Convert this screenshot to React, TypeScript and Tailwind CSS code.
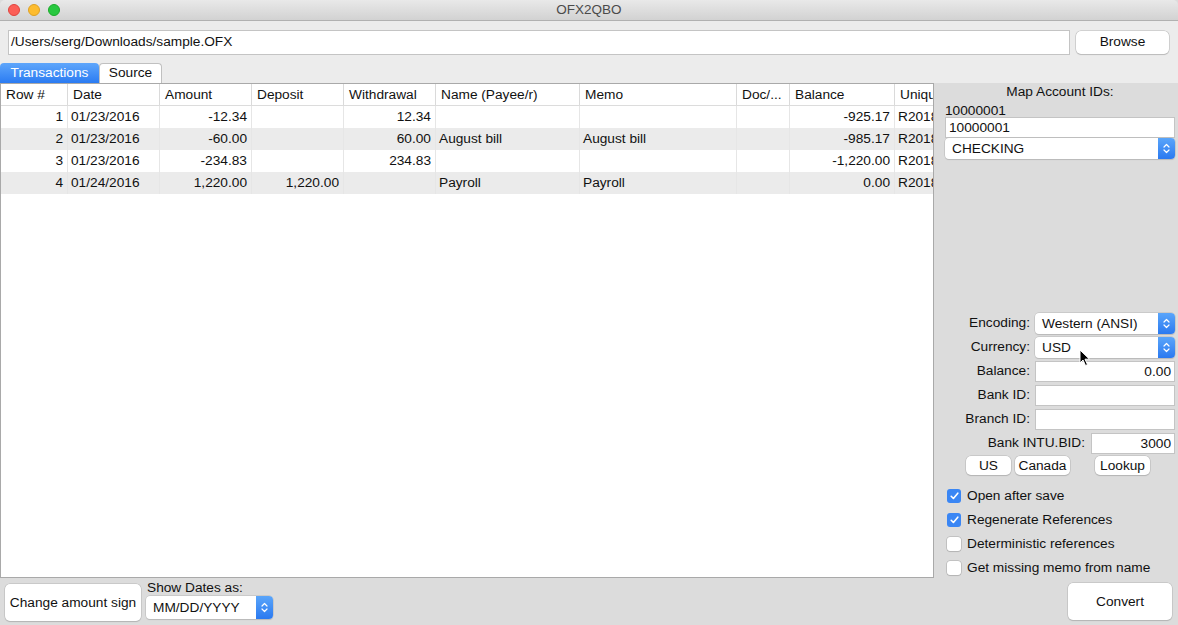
import React from 'react';

const cols = [66, 92, 92, 92, 92, 144, 157, 53, 105, 39];
const headers = ['Row #', 'Date', 'Amount', 'Deposit', 'Withdrawal', 'Name (Payee/r)', 'Memo', 'Doc/...', 'Balance', 'Uniqu'];
const rightAligned = [true, false, true, true, true, false, false, false, true, false];

const rows = [
  ['1', '01/23/2016', '-12.34', '', '12.34', '', '', '', '-925.17', 'R2018'],
  ['2', '01/23/2016', '-60.00', '', '60.00', 'August bill', 'August bill', '', '-985.17', 'R2018'],
  ['3', '01/23/2016', '-234.83', '', '234.83', '', '', '', '-1,220.00', 'R2018'],
  ['4', '01/24/2016', '1,220.00', '1,220.00', '', 'Payroll', 'Payroll', '', '0.00', 'R2018'],
];

function Stepper() {
  return (
    <div className="w-[17px] h-full rounded-r-[4px] bg-gradient-to-b from-[#5aa5fa] to-[#2a79f0] flex items-center justify-center">
      <svg width="7" height="11" viewBox="0 0 7 11" fill="none" stroke="white" strokeWidth="1.2" strokeLinecap="round" strokeLinejoin="round">
        <path d="M1 4 L3.5 1.5 L6 4" />
        <path d="M1 7 L3.5 9.5 L6 7" />
      </svg>
    </div>
  );
}

function Select({ value, className = '' }: { value: string; className?: string }) {
  return (
    <div className={`flex items-stretch bg-white rounded-[4px] shadow-[0_0_0_0.5px_#b8b8b8,0_1px_1px_rgba(0,0,0,0.15)] ${className}`}>
      <div className="flex-1 pl-[7px] flex items-center text-[13.7px] text-[#111] leading-none">{value}</div>
      <Stepper />
    </div>
  );
}

function Field({ value = '', className = '', right = false }: { value?: string; className?: string; right?: boolean }) {
  return (
    <div className={`bg-white border border-[#c4c4c4] flex items-center text-[13.7px] text-[#111] leading-none px-[3px] ${right ? 'justify-end' : ''} ${className}`}>
      {value}
    </div>
  );
}

function Button({ label, className = '' }: { label: string; className?: string }) {
  return (
    <div className={`bg-white rounded-[5px] shadow-[0_0_0_0.5px_#b5b5b5,0_1px_1px_rgba(0,0,0,0.18)] flex items-center justify-center text-[13.7px] text-[#111] leading-none ${className}`}>
      {label}
    </div>
  );
}

function Check({ checked, label }: { checked: boolean; label: string }) {
  return (
    <div className="flex items-center h-[24px] pl-[13px]">
      {checked ? (
        <div className="w-[14px] h-[14px] rounded-[3px] bg-[#3a86f4] flex items-center justify-center">
          <svg width="9" height="8" viewBox="0 0 9 8" fill="none" stroke="white" strokeWidth="1.6" strokeLinecap="round" strokeLinejoin="round">
            <path d="M1.2 4.3 L3.4 6.5 L7.8 1.2" />
          </svg>
        </div>
      ) : (
        <div className="w-[14px] h-[14px] rounded-[3px] bg-white shadow-[0_0_0_0.5px_#a8a8a8,0_1px_1px_rgba(0,0,0,0.12)]" />
      )}
      <span className="ml-[6px] text-[13.7px] text-[#111]">{label}</span>
    </div>
  );
}

export default function App() {
  return (
    <div className="w-[1178px] h-[625px] flex flex-col bg-[#dcdcdc] overflow-hidden font-['Liberation_Sans',Arial,sans-serif] text-[#111]">
      {/* title bar */}
      <div className="h-[21px] shrink-0 relative flex items-center justify-center bg-gradient-to-b from-[#e9e9e9] to-[#d2d2d2] border-b border-[#b1b1b1] rounded-t-[5px]">
        <div className="absolute left-[8px] top-[4px] flex gap-[8px]">
          <div className="w-[12px] h-[12px] rounded-full bg-[#fc5f57] border border-[#e0443e]" />
          <div className="w-[12px] h-[12px] rounded-full bg-[#fdbc2e] border border-[#dea123]" />
          <div className="w-[12px] h-[12px] rounded-full bg-[#28c840] border border-[#1aab29]" />
        </div>
        <span className="text-[13.5px] text-[#4a4a4a]">OFX2QBO</span>
      </div>

      {/* path row */}
      <div className="bg-[#ececec] shrink-0">
        <div className="flex items-center h-[42px] pl-[8px] pr-[9px] gap-[6px]">
          <Field value="/Users/serg/Downloads/sample.OFX" className="flex-1 h-[25px] pl-[2px]" />
          <Button label="Browse" className="w-[93px] h-[23px]" />
        </div>
        <div className="flex h-[20px] items-end">
          <div className="w-[99px] h-[20px] rounded-t-[4px] bg-gradient-to-b from-[#5ea6fb] to-[#2a7bf2] text-white text-[13.7px] flex items-center justify-center">Transactions</div>
          <div className="w-[63px] h-[20px] rounded-t-[4px] bg-white border border-b-0 border-[#c0c0c0] text-[13.7px] flex items-center justify-center">Source</div>
        </div>
      </div>

      {/* main */}
      <div className="flex flex-1 min-h-0">
        <div className="w-[934px] flex flex-col">
          <div className="h-[495px] bg-white border border-[#a9a9a9] overflow-hidden">
            <div className="flex h-[22px] border-b border-[#dcdcdc]">
              {headers.map((h, i) => (
                <div key={h} style={{ width: cols[i] }} className={`shrink-0 flex items-center pl-[5px] pt-[2px] text-[13.7px] whitespace-nowrap overflow-hidden ${i > 0 ? 'border-l border-[#dadada]' : ''}`}>
                  {h}
                </div>
              ))}
            </div>
            {rows.map((r, ri) => (
              <div key={ri} className={`flex h-[22px] ${ri % 2 === 1 ? 'bg-[#ebebeb]' : 'bg-white'}`}>
                {r.map((c, ci) => (
                  <div
                    key={ci}
                    style={{ width: cols[ci] }}
                    className={`shrink-0 flex items-center text-[13.7px] whitespace-nowrap overflow-hidden ${rightAligned[ci] ? 'justify-end pr-[4px]' : 'pl-[3px]'} ${ci > 0 ? 'border-l border-[#e6e6e6]' : ''}`}
                  >
                    {c}
                  </div>
                ))}
              </div>
            ))}
          </div>
          <div className="flex flex-1 items-start pt-[6px] pl-[5px]">
            <Button label="Change amount sign" className="w-[136px] h-[37px]" />
            <div className="ml-[5px] flex flex-col">
              <span className="text-[13.7px] leading-[15px] mt-[-4px] pl-[1px]">Show Dates as:</span>
              <Select value="MM/DD/YYYY" className="w-[127px] h-[23px] mt-[1px]" />
            </div>
          </div>
        </div>

        {/* right panel */}
        <div className="flex-1 flex flex-col pl-[11px] pr-[3px] relative">
          <div className="text-[13.7px] text-center leading-[16px] mt-[1px]">Map Account IDs:</div>
          <div className="text-[13.7px] leading-[16px] mt-[3px]">10000001</div>
          <Field value="10000001" className="h-[21px] mt-[-2px]" />
          <Select value="CHECKING" className="h-[21px]" />

          <div className="mt-[154px] flex flex-col gap-[3px]">
            <div className="flex items-center h-[21px]">
              <span className="w-[90px] text-right pr-[5px] text-[13.7px]">Encoding:</span>
              <Select value="Western (ANSI)" className="flex-1 h-[21px]" />
            </div>
            <div className="flex items-center h-[21px]">
              <span className="w-[90px] text-right pr-[5px] text-[13.7px]">Currency:</span>
              <Select value="USD" className="flex-1 h-[21px]" />
            </div>
            <div className="flex items-center h-[21px]">
              <span className="w-[90px] text-right pr-[5px] text-[13.7px]">Balance:</span>
              <Field value="0.00" right className="flex-1 h-[21px]" />
            </div>
            <div className="flex items-center h-[21px]">
              <span className="w-[90px] text-right pr-[5px] text-[13.7px]">Bank ID:</span>
              <Field className="flex-1 h-[21px]" />
            </div>
            <div className="flex items-center h-[21px]">
              <span className="w-[90px] text-right pr-[5px] text-[13.7px]">Branch ID:</span>
              <Field className="flex-1 h-[21px]" />
            </div>
            <div className="flex items-center h-[21px]">
              <span className="w-[146px] text-right pr-[6px] text-[13.7px]">Bank INTU.BID:</span>
              <Field value="3000" right className="flex-1 h-[21px]" />
            </div>
          </div>
          <div className="flex mt-[2px] pl-[21px]">
            <Button label="US" className="w-[45px] h-[19px]" />
            <Button label="Canada" className="w-[55px] h-[19px] ml-[4px]" />
            <Button label="Lookup" className="w-[55px] h-[19px] ml-[25px]" />
          </div>
          <div className="mt-[9px] -ml-[11px] flex flex-col">
            <Check checked label="Open after save" />
            <Check checked label="Regenerate References" />
            <Check checked={false} label="Deterministic references" />
            <Check checked={false} label="Get missing memo from name" />
          </div>
          <div className="flex justify-end mt-[3px] pr-[3px]">
            <Button label="Convert" className="w-[104px] h-[37px]" />
          </div>

          {/* mouse cursor */}
          <svg className="absolute left-[145px] top-[266px]" width="12" height="18" viewBox="0 0 12 18">
            <path d="M1 1 L1 14 L4 11 L6.5 16.5 L8.5 15.6 L6 10.2 L10.5 10.2 Z" fill="black" stroke="white" strokeWidth="1" />
          </svg>
        </div>
      </div>
    </div>
  );
}
